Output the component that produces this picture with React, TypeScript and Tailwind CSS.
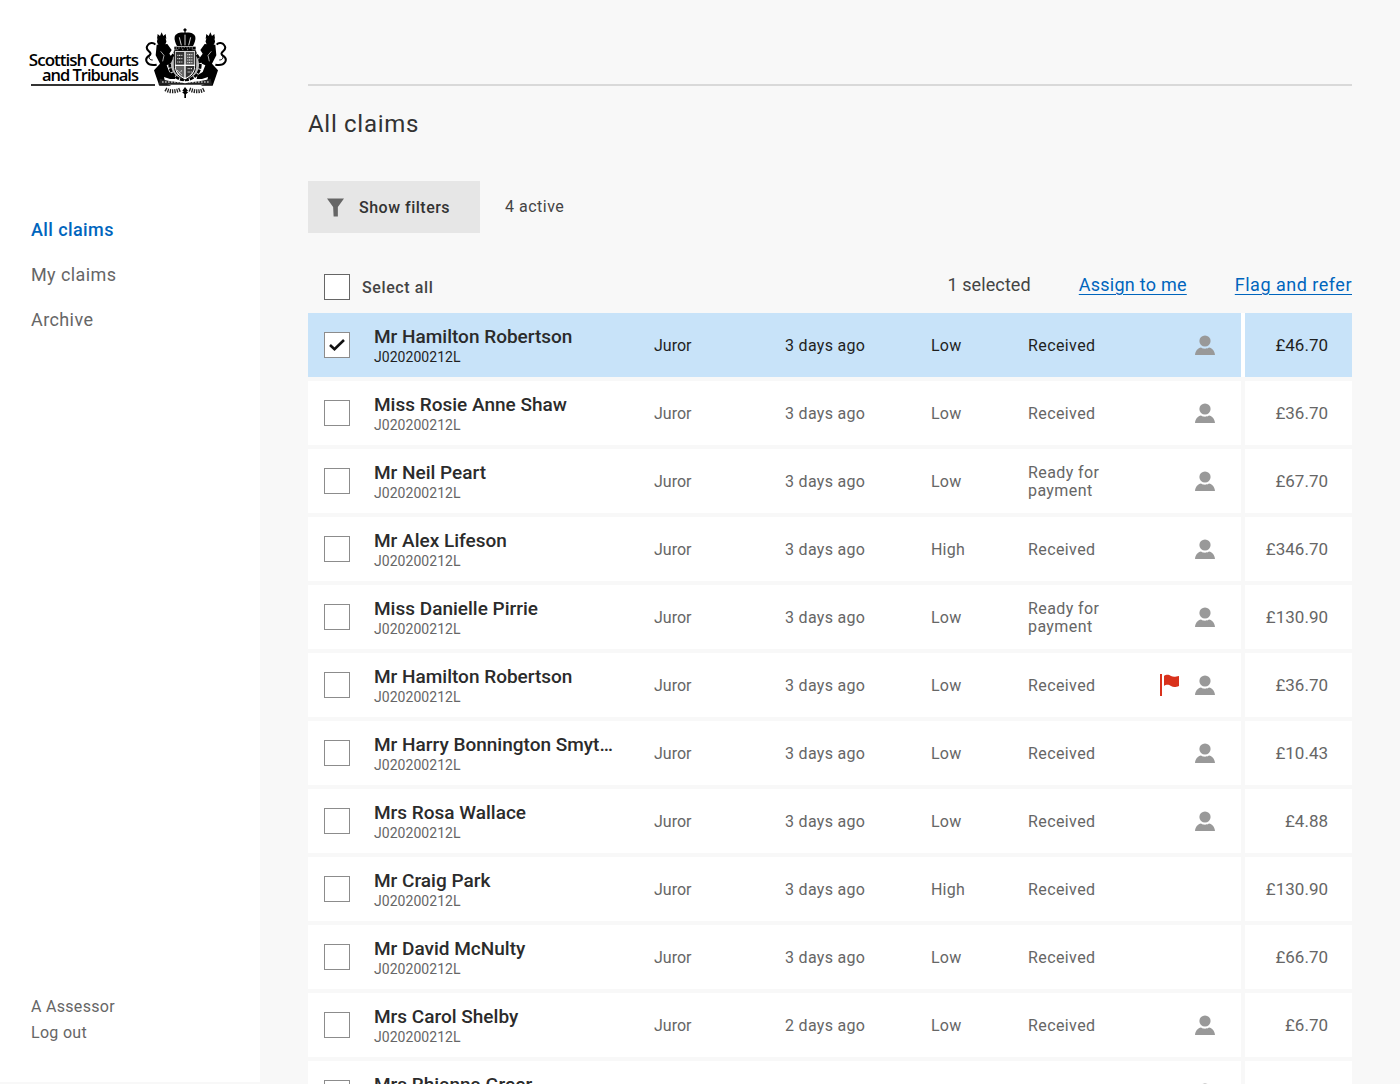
import { FC } from "react";

interface Claim {
  name: string;
  age?: string;
  risk?: string;
  status?: string;
  amount: string;
  flagged?: boolean;
  assigned?: boolean;
  selected?: boolean;
}

const claims: Claim[] = [
  { name: "Mr Hamilton Robertson", amount: "£46.70", selected: true },
  { name: "Miss Rosie Anne Shaw", amount: "£36.70" },
  { name: "Mr Neil Peart", amount: "£67.70", status: "Ready for payment" },
  { name: "Mr Alex Lifeson", amount: "£346.70", risk: "High" },
  { name: "Miss Danielle Pirrie", amount: "£130.90", status: "Ready for payment" },
  { name: "Mr Hamilton Robertson", amount: "£36.70", flagged: true },
  { name: "Mr Harry Bonnington Smyth-Jones", amount: "£10.43" },
  { name: "Mrs Rosa Wallace", amount: "£4.88" },
  { name: "Mr Craig Park", amount: "£130.90", risk: "High", assigned: false },
  { name: "Mr David McNulty", amount: "£66.70", assigned: false },
  { name: "Mrs Carol Shelby", amount: "£6.70", age: "2 days ago" },
  { name: "Mrs Rhianna Greer", amount: "£36.70" },
];

const PersonIcon = () => (
  <svg width="20" height="20" viewBox="0 0 20 20" className="fill-[#999999]">
    <circle cx="10" cy="6" r="5.6" />
    <path d="M0 20 C0.5 15.5 3 13.4 6 12.6 C8 14.2 12 14.2 14 12.6 C17 13.4 19.5 15.5 20 20 Z" />
  </svg>
);

const FlagIcon = () => (
  <svg width="20" height="22" viewBox="0 0 20 22" className="fill-[#d9321c]">
    <rect x="0" y="0" width="2" height="22" />
    <path d="M4 2 C7 0 9 1 11 2 C13 3 15 3 19 2 L19 12 C15 13.5 13 13 11 12 C9 11 7 10 4 12 Z" />
  </svg>
);

// lion drawn on the left, mirrored for the unicorn
const Beast = () => (
  <g>
    <circle cx="65" cy="58" r="14" />
    <path d="M51 50 l2 -14 7 6 5 -11 5 11 7 -6 2 14 Z" />
    <path d="M50 68 L82 66 L95 84 L88 95 L99 110 L90 125 L80 130 L88 150 L104 160 L106 171 L90 171 L72 165 L76 184 L94 191 L58 191 L47 160 L42 145 L60 125 L47 100 Z" />
    <path d="M50 128 C20 134 10 112 28 100 C42 90 10 86 23 70 C28 62 40 60 46 68" fill="none" stroke="#000" strokeWidth="6" />
    <path d="M38 114 C26 114 24 104 32 98" fill="none" stroke="#000" strokeWidth="3" />
    <path d="M62 88 L72 100 L68 118" fill="none" stroke="#fff" strokeWidth="2" />
  </g>
);

const Crest = () => (
  <svg width="82" height="70" viewBox="15 18 246 210" className="fill-black shrink-0 relative">
    {/* crown */}
    <path d="M135 18 l6 6 -4 3 v5 c12 -2 26 2 29 12 c2 8 -3 20 -7 28 h-48 c-4 -8 -9 -20 -7 -28 c3 -10 17 -14 29 -12 v-5 l-4 -3 Z" />
    <path d="M135 38 v32 M118 46 l6 24 M152 46 l-6 24" stroke="#fff" strokeWidth="2.5" fill="none" />
    <rect x="103" y="74" width="64" height="9" />
    <path d="M107 78 h56" stroke="#fff" strokeWidth="2" strokeDasharray="4 4" />
    {/* garter and shield */}
    <circle cx="135" cy="128" r="46" fill="#bbb" stroke="#000" strokeWidth="8" strokeDasharray="12 3" />
    <path d="M103 86 h64 v46 c0 23 -16 33 -32 42 c-16 -9 -32 -19 -32 -42 Z" fill="#fff" stroke="#000" strokeWidth="3" />
    <rect x="107" y="90" width="26" height="38" fill="#333" />
    <rect x="137" y="90" width="26" height="38" fill="#555" />
    <path d="M107 132 h26 v36 c-14 -7 -26 -18 -26 -36 Z" fill="#666" />
    <path d="M137 132 h26 c0 18 -12 29 -26 36 Z" fill="#333" />
    <path d="M112 100 h16 M112 110 h16 M112 120 h16 M142 98 h16 M142 106 h16 M142 114 h16 M142 122 h16 M112 145 l14 14 M126 145 l-12 12 M143 140 h14 M143 150 h12" stroke="#fff" strokeWidth="3" strokeDasharray="3 2" />
    <Beast />
    <g transform="translate(276 0) scale(-1 1)">
      <Beast />
    </g>
    {/* ground and motto scroll */}
    <path d="M60 170 C90 180 115 178 135 184 C155 178 180 180 212 170 L216 188 H56 Z" fill="#222" />
    <path d="M66 180 h140" stroke="#fff" strokeWidth="3" strokeDasharray="5 4" />
    <path d="M76 202 C90 210 105 210 122 202 M148 202 C165 210 180 210 194 202" fill="none" stroke="#222" strokeWidth="12" strokeDasharray="4 3" />
    <path d="M135 195 l9 11 -5 4 h6 l-7 7 v14 h-5 v-14 l-7 -7 h6 l-5 -4 Z" />
  </svg>
);

const Logo = () => (
  <div className="flex items-start ml-[31px] mt-[28px] h-[70px]">
    <div className="w-[124px] h-[58px] shrink-0 flex flex-col items-end justify-end border-b-2 border-[#333333] pr-[17px] pb-[1px] -mr-[10px] font-['Open_Sans',sans-serif] text-black">
      <p className="text-[17px] leading-[15px] font-semibold tracking-[-1px] whitespace-nowrap">Scottish Courts</p>
      <p className="text-[16.5px] leading-[16px] font-semibold tracking-[-1px] whitespace-nowrap">and Tribunals</p>
    </div>
    <Crest />
  </div>
);

const Checkbox: FC<{ checked?: boolean; dark?: boolean }> = ({ checked, dark }) => (
  <div className={`w-[26px] h-[26px] bg-white border flex items-center justify-center shrink-0 ${dark ? "border-[#666666]" : "border-[#8c8c8c]"}`}>
    {checked && (
      <svg width="16" height="12" viewBox="0 0 16 12" fill="none" stroke="#111111" strokeWidth="2.6">
        <path d="M1 6 L5.5 10.2 L15 1" />
      </svg>
    )}
  </div>
);

const ClaimRow: FC<{ claim: Claim }> = ({ claim }) => {
  const bg = claim.selected ? "bg-[#c8e3f9]" : "bg-white";
  const text = claim.selected ? "text-[#1f1f1f]" : "text-[#666666]";
  return (
    <div className={`flex h-[64px] gap-[4px] shrink-0 ${claim.selected ? "bg-white" : ""}`}>
      <div className={`w-[933px] flex items-center ${bg} ${text} text-[16px]`}>
        <div className="w-[66px] pl-[16px] shrink-0">
          <Checkbox checked={claim.selected} />
        </div>
        <div className="w-[280px] shrink-0 pr-[32px] pt-[1px]">
          <p className="text-[19px] leading-[23px] font-medium text-[#2b2b2b] truncate">{claim.name}</p>
          <p className="text-[14px] leading-[17px] mt-[1px] tracking-[0.05px]">J020200212L</p>
        </div>
        <div className="w-[131px] shrink-0 pt-[1px]">Juror</div>
        <div className="w-[146px] shrink-0 pt-[1px] tracking-[0.3px]">{claim.age ?? "3 days ago"}</div>
        <div className="w-[97px] shrink-0 pt-[1px] tracking-[0.2px]">{claim.risk ?? "Low"}</div>
        <div className="w-[132px] shrink-0 leading-[18px] tracking-[0.4px] pr-[24px] pt-[2px]">{claim.status ?? "Received"}</div>
        <div className="w-[20px] shrink-0 flex justify-center">{claim.flagged && <FlagIcon />}</div>
        <div className="ml-[15px] w-[20px] shrink-0">{claim.assigned !== false && <PersonIcon />}</div>
      </div>
      <div className={`flex-1 flex items-center justify-end pr-[24px] pt-[1px] text-[17px] ${bg} ${text}`}>{claim.amount}</div>
    </div>
  );
};

export default function App() {
  return (
    <div className="flex items-start h-[1084px] w-[1400px] overflow-hidden bg-[#f8f8f8] font-['Roboto',sans-serif]">
      <aside className="w-[260px] h-[1082px] shrink-0 bg-white flex flex-col">
        <Logo />
        <nav className="mt-[120px] ml-[31px] flex flex-col gap-[21px] text-[18px] leading-[24px] text-[#666666] tracking-[0.4px]">
          <a className="text-[#0065bd] font-medium">All claims</a>
          <a>My claims</a>
          <a>Archive</a>
        </nav>
        <div className="mt-auto mb-[36px] ml-[31px] text-[16px] leading-[26px] text-[#666666] tracking-[0.3px]">
          <p>A Assessor</p>
          <p>Log out</p>
        </div>
      </aside>
      <main className="flex-1 min-w-0 px-[48px] flex flex-col h-[1084px] overflow-hidden">
        <div className="mt-[84px] border-t-2 border-[#d9d9d9] shrink-0" />
        <h1 className="mt-[22px] text-[24px] leading-[32px] font-normal text-[#333333] tracking-[0.7px] shrink-0">All claims</h1>
        <div className="mt-[41px] flex items-center shrink-0">
          <button className="w-[172px] h-[52px] bg-[#e6e6e6] flex items-center pl-[19px] gap-[15px] text-[16px] font-medium text-[#333333] tracking-[0.5px]">
            <svg width="17" height="19" viewBox="0 0 18 19" className="fill-[#666666]">
              <path d="M0 0 H18 L11.5 9 V19 H7 L6.5 9 Z" />
            </svg>
            <span className="pt-[1px]">Show filters</span>
          </button>
          <span className="ml-[25px] text-[16px] text-[#444444] tracking-[0.5px]">4 active</span>
        </div>
        <div className="mt-[34px] mb-[6px] h-[40px] flex items-center pl-[16px] shrink-0">
          <Checkbox dark />
          <span className="ml-[12px] pt-[1px] text-[16px] font-medium text-[#444444] tracking-[0.6px]">Select all</span>
          <span className="ml-auto mb-[5px] text-[18px] text-[#444444] tracking-[0.1px]">1 selected</span>
          <a className="ml-[48px] mb-[5px] text-[18px] text-[#0065bd] underline underline-offset-[3px] tracking-[0.25px]">Assign to me</a>
          <a className="ml-[48px] mb-[5px] text-[18px] text-[#0065bd] underline underline-offset-[3px] tracking-[0.5px]">Flag and refer</a>
        </div>
        <div className="flex flex-col gap-[4px] shrink-0">
          {claims.map((claim) => (
            <ClaimRow key={claim.name + claim.amount} claim={claim} />
          ))}
        </div>
      </main>
    </div>
  );
}
